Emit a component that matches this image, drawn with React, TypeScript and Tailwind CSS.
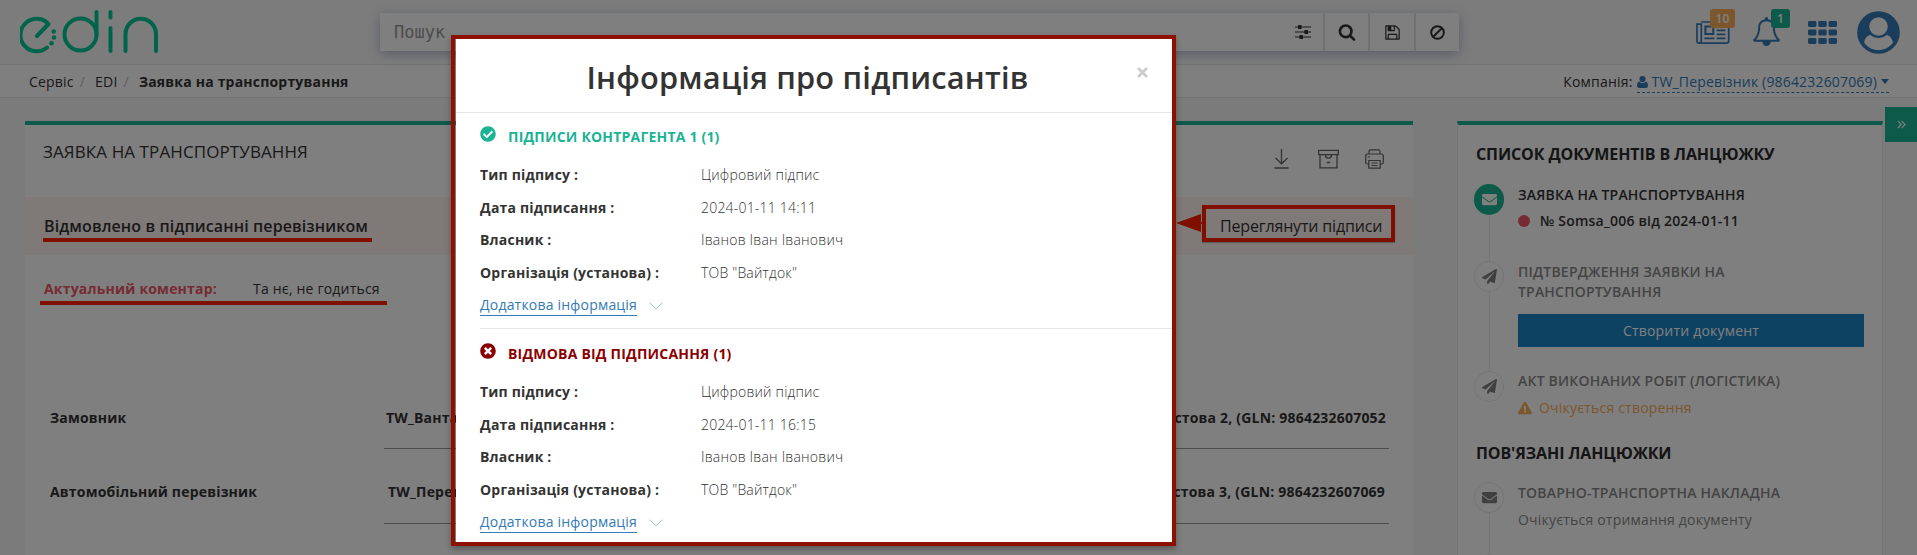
import React from "react";
import {
  FaCheckCircle,
  FaEnvelope,
  FaExclamationTriangle,
  FaPaperPlane,
  FaTimesCircle,
} from "react-icons/fa";

const Logo = () => (
  <svg width="140" height="44" viewBox="0 0 140 44" fill="none" stroke="#00c896" strokeWidth="4" strokeLinecap="round">
    <path d="M17 26 L28.500 14 A16.200 16.200 0 1 0 27 37.500" strokeLinejoin="round" />
    <circle cx="60.500" cy="24.500" r="16" />
    <path d="M76.500 2 V24" />
    <path d="M90.500 2 V7.500 M90.500 18 V41" />
    <path d="M105.500 41 V24 A15.200 15.200 0 0 1 136 24 V41" />
    <g fill="#00c896" stroke="none">
      <circle cx="33.700" cy="21.500" r="2.200" />
      <circle cx="34" cy="27.500" r="2.200" />
      <circle cx="31.500" cy="33.200" r="2.200" />
    </g>
  </svg>
);

const Sliders = () => (
  <svg width="16" height="14" viewBox="0 0 16 14" fill="#333">
    <path d="M0 1.400h16v1.200H0zM0 6.400h16v1.200H0zM0 11.400h16v1.200H0z" />
    <rect x="3" y="0" width="3.600" height="4" rx=".6" />
    <rect x="9.400" y="5" width="3.600" height="4" rx=".6" />
    <rect x="4.400" y="10" width="3.600" height="4" rx=".6" />
  </svg>
);

const Search = () => (
  <svg width="18" height="18" viewBox="0 0 1792 1792" fill="#333">
    <path d="M1216 832q0-185-131.500-316.500t-316.500-131.500-316.500 131.500-131.500 316.500 131.500 316.500 316.500 131.500 316.500-131.500 131.500-316.500zm512 832q0 52-38 90t-90 38q-54 0-90-38l-343-342q-179 124-399 124-143 0-273.500-55.500t-225-150-150-225-55.500-273.500 55.500-273.500 150-225 225-150 273.500-55.500 273.500 55.500 225 150 150 225 55.500 273.500q0 220-124 399l343 343q37 37 37 90z" />
  </svg>
);

const Floppy = () => (
  <svg width="17" height="17" viewBox="0 0 1792 1792" fill="#333">
    <path d="M512 1536h768v-384h-768v384zm896 0h128v-896q0-14-10-38.500t-20-34.500l-281-281q-10-10-34-20t-39-10v416q0 40-28 68t-68 28h-576q-40 0-68-28t-28-68v-416h-128v1280h128v-416q0-40 28-68t68-28h832q40 0 68 28t28 68v416zm-384-928v-320q0-13-9.500-22.500t-22.500-9.500h-192q-13 0-22.500 9.500t-9.500 22.500v320q0 13 9.500 22.500t22.500 9.500h192q13 0 22.500-9.500t9.500-22.500zm640 32v928q0 40-28 68t-68 28h-1344q-40 0-68-28t-28-68v-1344q0-40 28-68t68-28h928q40 0 88 20t76 48l280 280q28 28 48 76t20 88z" />
  </svg>
);

const Ban = () => (
  <svg width="15" height="15" viewBox="0 0 15 15" fill="none" stroke="#333" strokeWidth="2">
    <circle cx="7.500" cy="7.500" r="6.300" />
    <path d="M12 3 L3 12" />
  </svg>
);

const Newspaper = () => (
  <svg width="34" height="30" viewBox="0 0 34 30" fill="none" stroke="#337ab7" strokeWidth="1.700">
    <path d="M5.300 5H30.700Q32.700 5 32.700 7V24Q32.700 26.200 30.500 26.200H3.200Q1 26.200 1 24V7.200H5.300V23.500Q5.300 26 3.300 26" />
    <path d="M9.400 9.500H17.300V17H9.400z" strokeWidth="2" />
    <path d="M20.600 9.500H29.400M20.600 13.400H29.400M20.600 17.300H29.400M20.600 21.300H29.400M8.400 21.300H18.300" />
  </svg>
);

const Bell = () => (
  <svg width="29" height="29" viewBox="0 0 1792 1792" fill="#337ab7">
    <path d="M246 1408h1300q-266-300-266-832 0-51-24-105t-69-103-121.500-80.500-169.500-31.500-169.500 31.500-121.500 80.500-69 103-24 105q0 532-266 832zm1482 0q0 52-38 90t-90 38h-448q0 106-75 181t-181 75-181-75-75-181h-448q-52 0-90-38t-38-90q50-42 91-88t85-119.500 74.500-158.500 50-206 19.500-260q0-152 117-282.500t307-158.500q-8-19-8-39 0-40 28-68t68-28 68 28 28 68q0 20-8 39 190 28 307 158.500t117 282.500q0 139 19.500 260t50 206 74.500 158.500 85 119.500 91 88z" />
  </svg>
);

const Apps = () => (
  <svg width="29" height="23" viewBox="0 0 29 23" fill="#337ab7">
    {[0, 8.5, 17].map((y) =>
      [0, 10.3, 20.6].map((x) => <rect key={`${x}-${y}`} x={x} y={y} width="8.400" height="6" rx="1.400" />),
    )}
  </svg>
);

const Avatar = () => (
  <svg width="43" height="43" viewBox="0 0 43 43">
    <circle cx="21.500" cy="21.500" r="21.300" fill="#337ab7" />
    <circle cx="21.500" cy="15.500" r="9.300" fill="#fcfcfc" />
    <path d="M7 31.500 C8 27 10.500 24.300 13.500 24 C18 28 25 28 29.500 24 C32.500 24.300 35 27 36 31.500 C32.500 36.500 27.500 39 21.500 39 S10.500 36.500 7 31.500Z" fill="#fcfcfc" />
  </svg>
);

const UserGlyph = () => (
  <svg width="11" height="12" viewBox="0 0 11 12" fill="#337ab7">
    <circle cx="5.500" cy="3.100" r="3.100" />
    <path d="M2.300 5.400C.6 5.900 0 7.700 0 9.500 0 11 .8 12 2.200 12h6.600C10.200 12 11 11 11 9.500c0-1.800-.6-3.600-2.300-4.100C7 7.500 4 7.500 2.300 5.400z" />
  </svg>
);

const Download = () => (
  <svg width="15" height="20" viewBox="0 0 15 20" fill="none" stroke="#666" strokeWidth="1.300">
    <path d="M7.500 0V14.500M1.500 9L7.500 14.800L13.500 9M.5 19H14.500" />
  </svg>
);

const Archive = () => (
  <svg width="21" height="20" viewBox="0 0 21 20" fill="none" stroke="#666" strokeWidth="1.300">
    <path d="M.7 1.300H20.300V5.700H.7zM2 5.700V18.800H19V5.700M7.500 6C7.500 8 9 9.200 10.500 9.200S13.500 8 13.500 6M8.800 13.500H12.200" />
  </svg>
);

const Printer = () => (
  <svg width="19" height="20" viewBox="0 0 19 20" fill="none" stroke="#666" strokeWidth="1.200">
    <path d="M4 5V2.500Q4 .8 5.600 .8H13.400Q15 .8 15 2.500V5M3.500 15H2.300Q.7 15 .7 13.300V7Q.7 5 2.500 5H16.500Q18.300 5 18.300 7V13.300Q18.300 15 16.700 15H15.500M3.800 11.500H15.200V19.200H3.800zM6.500 14H12.500M6.500 16.500H12.500M2.700 8H5" />
  </svg>
);

const Chevron = () => (
  <svg className="mt-[9px] ml-[12px]" width="14" height="8" viewBox="0 0 14 8" fill="none" stroke="#9bbfdd" strokeWidth="1">
    <path d="M.5 .5L7 7L13.500 .5" />
  </svg>
);

const PartyRow = ({ label, start, end, pad }: { label: string; start: string; end: string; pad: string }) => (
  <div className="flex w-full pr-[24px] pl-[25px]">
    <div className="w-[334px] leading-[20px] font-bold">{label}</div>
    <div className={`flex flex-1 justify-between border-b border-[#999] leading-[20px] font-bold ${pad}`}>
      <span>{start}</span>
      <span>{end}</span>
    </div>
  </div>
);

const Step = ({ active, icon, height, children }: { active?: boolean; icon: React.ReactNode; height: string; children: React.ReactNode }) => (
  <div className={`flex ${height}`}>
    <div className="flex w-[30px] shrink-0 flex-col items-center">
      <div
        className={`flex h-[31px] w-[30px] shrink-0 items-center justify-center rounded-full ${
          active ? "bg-[#1ab394] text-white" : "border border-[#e7eaec] text-[#808080]"
        }`}
      >
        {icon}
      </div>
      <div className="w-px flex-1 bg-[#e7eaec]" />
    </div>
    <div className="flex-1 pl-[14px]">{children}</div>
  </div>
);

const SignerBlock = ({ refused, title, date }: { refused?: boolean; title: string; date: string }) => {
  const rows = [
    ["Тип підпису :", "Цифровий підпис"],
    ["Дата підписання :", date],
    ["Власник :", "Іванов Іван Іванович"],
    ["Організація (установа) :", 'ТОВ "Вайтдок"'],
  ];
  return (
    <section className={`pl-[24px] ${refused ? "h-[214px] pt-px" : "h-[215px]"}`}>
      <h3 className={`flex h-[46px] font-bold ${refused ? "text-[#8b0000]" : "text-[#1ab394]"}`}>
        <span className="mt-[13px] mr-[12px]">
          {refused ? <FaTimesCircle size={16} /> : <FaCheckCircle size={16} />}
        </span>
        <span className="mt-[14px] leading-[20px]">{title}</span>
      </h3>
      {rows.map(([k, v]) => (
        <div key={k} className="flex h-[32.500px] items-center">
          <div className="w-[221px] font-bold">{k}</div>
          <div className="font-light text-[#333]">{v}</div>
        </div>
      ))}
      <div className="flex pt-[4px]">
        <a className="h-[23px] border-b border-[#337ab7] leading-[24px] text-[#337ab7]">Додаткова інформація</a>
        <Chevron />
      </div>
    </section>
  );
};

export default function App() {
  return (
    <div className="relative h-[555px] w-[1917px] overflow-hidden bg-[#f6f6f7] font-['Open_Sans',sans-serif] text-[14px] leading-[20px] tracking-[0.200px] text-[#333]">
      <header className="flex h-[65px] border-b border-[#e7e7e7] bg-[#f8f8f8] pr-[17px]">
        <div className="w-[380px] pt-[10px] pl-[20px]">
          <Logo />
        </div>
        <div className="mt-[13px] flex h-[38px] w-[1079px] items-stretch bg-white shadow-[0_3px_12px_rgba(60,70,130,0.35)]">
          <div className="flex-1 pt-[8px] pl-[14px] font-['DejaVu_Sans_Mono',monospace] text-[17px] leading-[22px] tracking-[0px] text-[#999]">
            Пошук
          </div>
          <div className="flex w-[28px] items-center"><Sliders /></div>
          <div className="flex w-[45px] items-center justify-center border-l-2 border-[#e2e2e2]"><Search /></div>
          <div className="flex w-[46px] items-center justify-center border-l-2 border-[#e2e2e2]"><Floppy /></div>
          <div className="flex w-[45px] items-center border-l-2 border-[#e2e2e2] pl-[14px]"><Ban /></div>
        </div>
        <div className="flex flex-1 justify-end">
          <div className="relative mt-[17px] mr-[22px]">
            <Newspaper />
            <span className="absolute -top-[8px] left-[14px] flex h-[19px] w-[25px] items-center justify-center rounded-[3px] bg-[#f8ac59] text-[12px] font-semibold text-white">10</span>
          </div>
          <div className="relative mt-[17px] mr-[27px]">
            <Bell />
            <span className="absolute -top-[8px] left-[19px] flex h-[19px] w-[19px] items-center justify-center rounded-[3px] bg-[#1ab394] text-[12px] font-semibold text-white">1</span>
          </div>
          <div className="mt-[21px] mr-[20px]"><Apps /></div>
          <div className="mt-[11px]"><Avatar /></div>
        </div>
      </header>

      <nav className="flex h-[33px] items-center justify-between border-b border-[#e7e7e7] bg-white pt-[2px] pr-[28px] pl-[29px]">
        <div className="flex">
          <span>Сервіс</span>
          <span className="ml-[6px] text-[#bbb]">/</span>
          <span className="ml-[10px]">EDI</span>
          <span className="ml-[6px] text-[#bbb]">/</span>
          <span className="ml-[10px] font-bold">Заявка на транспортування</span>
        </div>
        <div className="flex">
          <span className="mr-[4px]">Компанія:</span>
          <span className="flex items-center border-b border-dashed border-[#337ab7] text-[#337ab7]">
            <UserGlyph />
            <span className="ml-[4px] tracking-[0.170px]">TW_Перевізник (9864232607069)</span>
            <span className="ml-[4px] h-0 w-0 border-x-[4.500px] border-t-[5px] border-x-transparent border-t-[#337ab7]" />
          </span>
        </div>
      </nav>

      <div className="flex h-[457px] pl-[25px]">
        <main className="mt-[23px] h-[434px] w-[1388px] border-t-4 border-[#1ab394] bg-white">
          <div className="flex h-[72px] justify-between pr-[29px] pl-[18px]">
            <h1 className="pt-[17px] text-[17px] font-medium tracking-[0.100px]">ЗАЯВКА НА ТРАНСПОРТУВАННЯ</h1>
            <div className="mt-[24px] flex">
              <span className="mr-[29px]"><Download /></span>
              <span className="mr-[26px]"><Archive /></span>
              <Printer />
            </div>
          </div>
          <div className="flex h-[58px] justify-between bg-[#fff3f0] pr-[18px] pl-[18px]">
            <div className="mt-[15px] h-[30px] w-[329px] border-b-4 border-[#ff2000] pl-px text-[16px] leading-[28px] font-semibold tracking-[0.120px] whitespace-nowrap">
              Відмовлено в підписанні перевізником
            </div>
            <div className="mt-[8px] flex">
              <svg className="mt-[9px]" width="26" height="18" viewBox="0 0 26 18" fill="#ff2000">
                <path d="M0 9L25 0V8H26V10H25V18z" />
              </svg>
              <div className="h-[37px] w-[193px] border-4 border-[#ff2000] pl-[14px] text-[16px] leading-[34px] tracking-[-0.170px] whitespace-nowrap shadow-[0_1px_1px_#bbb]">
                Переглянути підписи
              </div>
            </div>
          </div>
          <div className="flex h-[153px] pl-[15px]">
            <div className="mt-[22px] flex h-[28px] w-[347px] border-b-4 border-[#ff2000] pl-[4px] leading-[24px]">
              <span className="w-[209px] font-bold text-[#ed5565]">Актуальний коментар:</span>
              <span>Та нє, не годиться</span>
            </div>
          </div>
          <PartyRow label="Замовник" start="TW_Ванта" end="Тестова 2, (GLN: 9864232607052" pad="h-[41px] pl-[2px] pr-[3px]" />
          <div className="h-[33px]" />
          <PartyRow label="Автомобільний перевізник" start="TW_Перев" end="Тестова 3, (GLN: 9864232607069" pad="h-[42px] pl-[4px] pr-[4px]" />
        </main>

        <aside className="mt-[23px] ml-[44px] h-[434px] w-[426px] overflow-hidden border-x border-t-4 border-x-[#e7eaec] border-t-[#1ab394] bg-white pr-[18px] pl-[16px]">
          <h2 className="h-[59px] pt-[18px] pl-[2px] text-[16px] leading-[22px] font-bold tracking-[-0.100px] text-[#2a2a2a]">СПИСОК ДОКУМЕНТІВ В ЛАНЦЮЖКУ</h2>
          <Step active height="h-[77px]" icon={<FaEnvelope size={15} />}>
            <div className="pt-px font-semibold">ЗАЯВКА НА ТРАНСПОРТУВАННЯ</div>
            <div className="mt-[6px] flex items-center font-semibold">
              <span className="mr-[10px] h-3 w-3 rounded-full bg-[#ed5565]" />№ Somsa_006 від 2024-01-11
            </div>
          </Step>
          <Step height="h-[110px]" icon={<FaPaperPlane size={15} />}>
            <div className="w-[260px] pt-px font-semibold text-[#888]">ПІДТВЕРДЖЕННЯ ЗАЯВКИ НА ТРАНСПОРТУВАННЯ</div>
            <div className="mt-[12px] flex h-[33px] items-center justify-center bg-[#1c84c6] text-white">Створити документ</div>
          </Step>
          <div className="flex h-[61px]">
            <Step height="h-[31px]" icon={<FaPaperPlane size={15} />}>
              <div className="font-semibold whitespace-nowrap text-[#888]">АКТ ВИКОНАНИХ РОБІТ (ЛОГІСТИКА)</div>
              <div className="mt-[7px] flex items-center text-[#f8ac59]">
                <FaExclamationTriangle size={14} className="mr-[7px]" />
                Очікується створення
              </div>
            </Step>
          </div>
          <h2 className="h-[50px] pt-[10px] pl-[2px] text-[16px] leading-[22px] font-bold tracking-[-0.100px] text-[#2a2a2a]">ПОВ'ЯЗАНІ ЛАНЦЮЖКИ</h2>
          <Step height="h-[72px]" icon={<FaEnvelope size={15} />}>
            <div className="pt-px font-semibold text-[#888]">ТОВАРНО-ТРАНСПОРТНА НАКЛАДНА</div>
            <div className="mt-[7px] text-[#888]">Очікується отримання документу</div>
          </Step>
          <Step height="h-[31px]" icon={null}>{null}</Step>
        </aside>

        <button className="mt-[9px] ml-[2px] flex h-[35px] w-[32px] items-center justify-center bg-[#1ab394]">
          <svg width="9" height="9" viewBox="0 0 9 9" fill="none" stroke="#fff" strokeWidth="1.200">
            <path d="M.8 .8L4.300 4.500L.8 8.200M4.600 .8L8.100 4.500L4.600 8.200" />
          </svg>
        </button>
      </div>

      <div className="absolute inset-0 bg-black/50" />

      <div className="absolute top-[35px] left-[451px] h-[511px] w-[725px] border-4 border-[#8e1000] pl-px shadow-[0_3px_6px_rgba(0,0,0,0.3)]">
        <div className="h-full overflow-hidden bg-white">
          <div className="flex h-[74px] justify-between border-b border-[#e5e5e5] pr-[24px]">
            <h2 className="w-full pt-[16px] pl-[22px] text-center text-[30.800px] leading-[44px] font-semibold">Інформація про підписантів</h2>
            <svg className="mt-[28px] shrink-0" width="11" height="11" viewBox="0 0 11 11" stroke="#ccc" strokeWidth="2.800">
              <path d="M1 1L10 10M10 1L1 10" />
            </svg>
          </div>
          <SignerBlock title="ПІДПИСИ КОНТРАГЕНТА 1 (1)" date="2024-01-11 14:11" />
          <div className="ml-[24px] h-px bg-[#e5e5e5]" />
          <SignerBlock refused title="ВІДМОВА ВІД ПІДПИСАННЯ (1)" date="2024-01-11 16:15" />
        </div>
      </div>
    </div>
  );
}
